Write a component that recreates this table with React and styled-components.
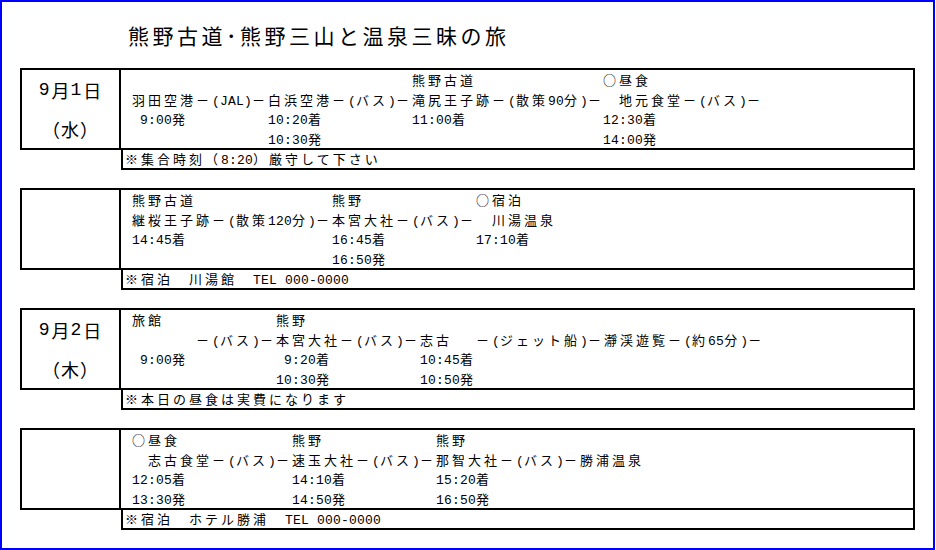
import styled, { createGlobalStyle } from "styled-components";

const GlobalStyle = createGlobalStyle`
  body {
    margin: 0;
    background: #fff;
    color: #000;
    font-family: "Noto Sans CJK JP", sans-serif;
  }
`;

const blocks = [
  {
    date: ["9月1日", "（水）"],
    cols: [136, 144, 191],
    lines: [
      ["", "", "熊野古道", "○昼食"],
      ["羽田空港－(JAL)－", "白浜空港－(バス)－", "滝尻王子跡－(散策90分)－", "　地元食堂－(バス)－"],
      [" 9:00発", "10:20着", "11:00着", "12:30着"],
      ["", "10:30発", "", "14:00発"],
    ],
    note: "※集合時刻（8:20）厳守して下さい",
  },
  {
    date: null,
    cols: [200, 144],
    lines: [
      ["熊野古道", "熊野", "○宿泊"],
      ["継桜王子跡－(散策120分)－", "本宮大社－(バス)－", "　川湯温泉"],
      ["14:45着", "16:45着", "17:10着"],
      ["", "16:50発", ""],
    ],
    note: "※宿泊　川湯館　TEL 000-0000",
  },
  {
    date: ["9月2日", "（木）"],
    cols: [144, 144, 56],
    lines: [
      ["旅館", "熊野", "", ""],
      ["　　　　－(バス)－", "本宮大社－(バス)－", "志古", "－(ジェット船)－瀞渓遊覧－(約65分)－"],
      [" 9:00発", " 9:20着", "10:45着", ""],
      ["", "10:30発", "10:50発", ""],
    ],
    note: "※本日の昼食は実費になります",
  },
  {
    date: null,
    cols: [160, 144],
    lines: [
      ["○昼食", "熊野", "熊野"],
      ["　志古食堂－(バス)－", "速玉大社－(バス)－", "那智大社－(バス)－勝浦温泉"],
      ["12:05着", "14:10着", "15:20着"],
      ["13:30発", "14:50発", "16:50発"],
    ],
    note: "※宿泊　ホテル勝浦　TEL 000-0000",
  },
];

// half-width ascii and full-width text get their own font and pitch
const Txt = ({ children }) => {
  const runs = String(children).match(/[\x20-\x7e]+|[^\x20-\x7e]+/g) || [];
  return runs.map((r, i) =>
    /^[\x20-\x7e]/.test(r) ? <Half key={i}>{r}</Half> : <Wide key={i}>{r}</Wide>
  );
};

const App = () => {
  return (
    <>
      <GlobalStyle />
      <Frame>
        <Title>熊野古道･熊野三山と温泉三昧の旅</Title>
        <Schedule>
          {blocks.map((b, i) => (
            <Block key={i}>
              <MainRow>
                <DateCell>
                  {b.date &&
                    b.date.map((d) => (
                      <DateLine key={d}>
                        <Txt>{d}</Txt>
                      </DateLine>
                    ))}
                </DateCell>
                <Body $cols={b.cols}>
                  {b.lines.map((line, li) =>
                    line.map((cell, ci) => (
                      <Cell key={li + "-" + ci}>
                        <Txt>{cell}</Txt>
                      </Cell>
                    ))
                  )}
                </Body>
              </MainRow>
              <NoteRow>
                <Txt>{b.note}</Txt>
              </NoteRow>
            </Block>
          ))}
        </Schedule>
      </Frame>
    </>
  );
};

export default App;

const Frame = styled.div`
  width: 935px;
  height: 550px;
  box-sizing: border-box;
  border: 2px solid #0000ff;
  overflow: hidden;
`;

const Title = styled.h1`
  margin: 18px 0 0 126px;
  height: 30px;
  font-family: "Noto Sans CJK JP", sans-serif;
  font-weight: 400;
  font-size: 21px;
  line-height: 30px;
  letter-spacing: 3.5px;
`;

const Schedule = styled.div`
  display: flex;
  flex-direction: column;
  gap: 18px;
  margin: 18px 0 0 18px;
  width: 895px;
`;

const Block = styled.section`
  display: flex;
  flex-direction: column;
`;

const MainRow = styled.div`
  display: grid;
  grid-template-columns: 99px 1fr;
  height: 82px;
  box-sizing: border-box;
  border: 2px solid #000;
`;

const DateCell = styled.div`
  display: grid;
  grid-template-rows: 1fr 1fr;
  border-right: 2px solid #000;
  font-size: 18px;
  --ws: 1px;
  --hs: 2px;
`;

const DateLine = styled.div`
  display: flex;
  align-items: center;
  justify-content: center;
  white-space: pre;
`;

const Body = styled.div`
  display: grid;
  grid-template-columns: ${(p) => p.$cols.map((c) => c + "px").join(" ")} 1fr;
  grid-auto-rows: 19.5px;
  padding-left: 11px;
  font-size: 13px;
  line-height: 19.5px;
`;

const Cell = styled.div`
  white-space: pre;
  min-width: 0;
  overflow: visible;
`;

const NoteRow = styled.div`
  margin-left: 101px;
  height: 20px;
  box-sizing: border-box;
  border: 2px solid #000;
  border-top: none;
  padding-left: 2px;
  font-size: 13px;
  line-height: 18px;
  white-space: pre;
`;

const Half = styled.span`
  font-family: "Liberation Mono", monospace;
  letter-spacing: var(--hs, 0.2px);
`;

const Wide = styled.span`
  font-family: "Noto Sans CJK JP", sans-serif;
  letter-spacing: var(--ws, 3px);
`;
